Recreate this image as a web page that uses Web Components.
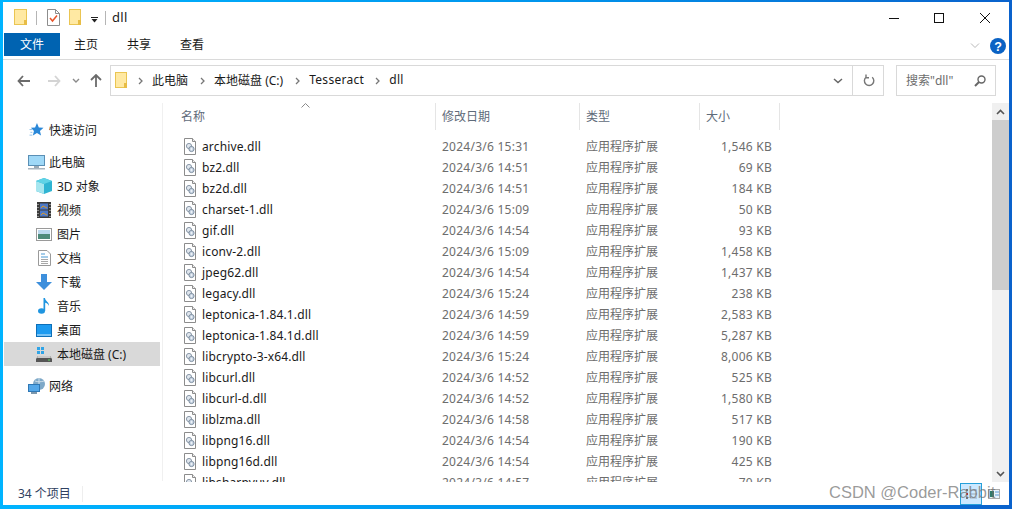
<!DOCTYPE html>
<html lang="zh-CN">
<head>
<meta charset="UTF-8">
<title>dll</title>
<style>
    html, body { margin: 0; height: 100%; }
    body { font: 12px "Noto Sans", "Noto Sans CJK SC", sans-serif; color: #1a1a1a; overflow: hidden; }
</style>
</head>
<body>

<template id="app-window">
    <style>
        :host { display: block; width: 1012px; height: 509px; box-sizing: border-box; padding: 2px 3px 4px; position: relative;
            background: linear-gradient(90deg, #00b4ff 0, #0094ec 55%, #0a62cc 100%); }
        .inner { background: #fff; height: 100%; display: flex; flex-direction: column; overflow: hidden; }
        .main { flex: 1; min-height: 0; display: flex; }
    </style>
    <div class="inner">
        <slot name="top"></slot>
        <div class="main"><slot></slot></div>
        <slot name="bottom"></slot>
    </div>
</template>

<template id="title-bar">
    <style>
        :host { display: flex; align-items: center; height: 31px; flex: none; }
        .quick { display: flex; align-items: center; padding-left: 11px; }
        .sep { width: 1px; height: 14px; background: #b5b5b5; }
        .title { margin-left: 6px; font-size: 13px; letter-spacing: .3px; margin-bottom: 1px; }
        .caps { margin-left: auto; display: flex; }
        .caps div { width: 45px; height: 31px; display: flex; align-items: center; justify-content: center; }
        .caps div:first-child { width: 44px; }
        .caps div:last-child { width: 48px; }
        svg { display: block; }
    </style>
    <div class="quick">
        <svg width="14" height="17" viewBox="0 0 14 17"><rect x=".5" y=".5" width="12" height="15" fill="#ffe9a3" stroke="#eac552"/><rect x="10" y="11" width="3" height="5" fill="#e8bd45"/></svg>
        <div class="sep" style="margin-left:8px"></div>
        <svg style="margin-left:10px" width="13" height="17" viewBox="0 0 13 17"><path d="M.5.5h8l4 4v12H.5z" fill="#fff" stroke="#8d8d8d"/><path d="M8.500.5v4h4" fill="none" stroke="#8d8d8d"/><path d="M3 9l2.500 3L10 6.500" fill="none" stroke="#e8542a" stroke-width="1.500"/></svg>
        <svg style="margin-left:9px" width="13" height="17" viewBox="0 0 13 17"><rect x=".5" y=".5" width="11" height="15" fill="#ffe9a3" stroke="#eac552"/><rect x="9" y="11" width="3" height="5" fill="#e8bd45"/></svg>
        <svg style="margin-left:8px" width="10" height="17" viewBox="0 0 10 17"><rect x="1" y="8" width="7" height="1" fill="#222"/><path d="M1.500 10h6l-3 3.500z" fill="#222"/></svg>
        <div class="sep" style="margin-left:5px"></div>
    </div>
    <span class="title"><slot></slot></span>
    <div class="caps">
        <div><svg width="10" height="10"><rect y="5" width="10" height="1" fill="#111"/></svg></div>
        <div><svg width="10" height="10"><rect x=".5" y=".5" width="9" height="9" fill="none" stroke="#111"/></svg></div>
        <div><svg width="10" height="10"><path d="M0 0l10 10M10 0L0 10" stroke="#111" fill="none"/></svg></div>
    </div>
</template>

<template id="ribbon-tabs">
    <style>
        :host { display: flex; height: 26px; flex: none; border-bottom: 1px solid #dadada; box-sizing: content-box; padding-left: 1px; align-items: flex-start; }
        .tab { height: 23px; line-height: 24px; text-align: center; width: 24px; margin-left: 29px; }
        .tab.file { width: 56px; margin-left: 0; background: #0063b1; color: #fff; }
        .tab.first { margin-left: 14px; }
        .right { margin-left: auto; display: flex; align-items: center; height: 26px; padding-right: 3px; gap: 10px; }
        svg { display: block; }
    </style>
    <div class="tab file">文件</div>
    <div class="tab first">主页</div>
    <div class="tab">共享</div>
    <div class="tab">查看</div>
    <div class="right">
        <svg width="10" height="6" viewBox="0 0 10 6"><path d="M1 .5l4 4 4-4" fill="none" stroke="#b8b8b8"/></svg>
        <svg width="16" height="16" viewBox="0 0 16 16"><circle cx="8" cy="8" r="8" fill="#0a62c4"/><text x="8" y="12.500" text-anchor="middle" font-family="Liberation Sans" font-weight="700" font-size="12.500" fill="#fff">?</text></svg>
    </div>
</template>

<template id="address-bar">
    <style>
        :host { display: flex; height: 43px; flex: none; align-items: flex-start; padding-top: 5px; box-sizing: border-box; }
        .navs { width: 107px; height: 31px; display: flex; align-items: center; flex: none; }
        .navs svg { flex: none; display: block; }
        .path { width: 774px; height: 31px; box-sizing: border-box; border: 1px solid #d9d9d9; display: flex; align-items: center; flex: none; }
        .path span { margin-bottom: 2px; }
        .ch { display: block; margin: 0 9px 0 12px; }
        .end { margin-left: auto; display: flex; align-items: center; height: 100%; }
        .end > div { height: 100%; display: flex; align-items: center; justify-content: center; }
        .drop { width: 31px; border-right: 1px solid #d9d9d9; box-sizing: border-box; padding-left: 2px; }
        .ref { width: 30px; padding-left: 1px; box-sizing: border-box; }
        .search { width: 100px; height: 31px; margin-left: 12px; box-sizing: border-box; border: 1px solid #d9d9d9; display: flex; align-items: center; padding: 0 9px; color: #6d6d6d; justify-content: space-between; }
        .search span { margin-bottom: 2px; }
    </style>
    <div class="navs">
        <svg style="margin-left:14px" width="13" height="12" viewBox="0 0 13 12"><path d="M6 1L1.500 6 6 11M1.500 6H13" fill="none" stroke="#6b6b6b" stroke-width="1.800"/></svg>
        <svg style="margin-left:18px" width="13" height="12" viewBox="0 0 13 12"><path d="M7 1l4.500 5L7 11M11.500 6H0" fill="none" stroke="#d4d4d4" stroke-width="1.800"/></svg>
        <svg style="margin-left:11px" width="8" height="6" viewBox="0 0 8 6"><path d="M1 1l3 3 3-3" fill="none" stroke="#8a8a8a" stroke-width="1.400"/></svg>
        <svg style="margin-left:10px" width="12" height="13" viewBox="0 0 12 13"><path d="M1 6l5-5 5 5M6 1v12" fill="none" stroke="#6b6b6b" stroke-width="1.800"/></svg>
    </div>
    <div class="path">
        <svg style="margin-left:4px;display:block" width="13" height="17" viewBox="0 0 13 17"><rect x=".5" y=".5" width="11" height="15" fill="#ffe9a3" stroke="#eac552"/><rect x="9" y="11" width="3" height="5" fill="#e8bd45"/></svg>
        <svg class="ch" style="margin-left:10px" width="5" height="8" viewBox="0 0 5 8"><path d="M1 1l3 3-3 3" fill="none" stroke="#777" stroke-width="1.300"/></svg>
        <span>此电脑</span>
        <svg class="ch" width="5" height="8" viewBox="0 0 5 8"><path d="M1 1l3 3-3 3" fill="none" stroke="#777" stroke-width="1.300"/></svg>
        <span>本地磁盘 (C:)</span>
        <svg class="ch" width="5" height="8" viewBox="0 0 5 8"><path d="M1 1l3 3-3 3" fill="none" stroke="#777" stroke-width="1.300"/></svg>
        <span style="letter-spacing:.3px">Tesseract</span>
        <svg class="ch" style="margin-left:11px" width="5" height="8" viewBox="0 0 5 8"><path d="M1 1l3 3-3 3" fill="none" stroke="#777" stroke-width="1.300"/></svg>
        <span style="letter-spacing:.3px">dll</span>
        <div class="end">
            <div class="drop"><svg width="10" height="6" viewBox="0 0 10 6"><path d="M1 1l4 3.500L9 1" fill="none" stroke="#666" stroke-width="1.500"/></svg></div>
            <div class="ref"><svg width="12" height="13" viewBox="0 0 12 13"><path d="M3 3.200a4.700 4.700 0 1 0 6.200 0M3 .5v3.200h3" fill="none" stroke="#777" stroke-width="1.400"/></svg></div>
        </div>
    </div>
    <div class="search">
        <span>搜索"dll"</span>
        <svg width="12" height="12" viewBox="0 0 12 12"><circle cx="7.500" cy="4.500" r="3.500" fill="none" stroke="#666" stroke-width="1.400"/><path d="M5 7l-4 4" stroke="#666" stroke-width="2"/></svg>
    </div>
</template>

<template id="nav-pane">
    <style>
        :host { display: block; width: 160px; flex: none; box-sizing: border-box; border-right: 1px solid #f0f0f0; padding: 15px 0 0 1px; margin-bottom: 1px; }
    </style>
    <slot></slot>
</template>

<template id="nav-item">
    <style>
        :host { display: flex; align-items: center; height: 24px; width: 156px; box-sizing: border-box; padding-left: 23px; }
        :host([sub]) { padding-left: 31px; }
        :host([selected]) { background: #d9d9d9; }
        :host([gap]) { margin-top: 8px; }
        .ic { width: 18px; height: 18px; flex: none; margin-right: 4px; display: flex; align-items: center; justify-content: center; }
    </style>
    <span class="ic"><slot name="icon"></slot></span>
    <span><slot></slot></span>
</template>

<template id="file-list">
    <style>
        :host { display: flex; flex: 1; min-width: 0; }
        .list { flex: 1; min-width: 0; display: flex; flex-direction: column; overflow: hidden; }
        .head, .row { display: grid; grid-template-columns: 273px 144px 120px 80px; }
        .head { height: 27px; flex: none; position: relative; color: #5f6b7a; }
        .head div { border-right: 1px solid #e5e5e5; padding-left: 6px; line-height: 27px; }
        .head div:first-child { padding-left: 18px; }
        .arrow { position: absolute; left: 138px; top: 0; display: block; }
        .rows { padding-top: 6px; flex: 1; overflow: hidden; }
        .row { height: 21px; line-height: 21px; color: #6d6d6d; }
        .row > div { white-space: nowrap; }
        .name { display: flex; align-items: center; padding-left: 21px; color: #1a1a1a; letter-spacing: .14px; }
        .name svg { display: block; margin-right: 6px; flex: none; }
        .date, .type { padding-left: 6px; }
        .date { letter-spacing: .25px; }
        .size { text-align: right; padding-right: 8px; letter-spacing: .25px; }
        .bar { width: 17px; flex: none; background: #f0f0f0; display: flex; flex-direction: column; }
        .btn { height: 17px; display: flex; align-items: center; justify-content: center; flex: none; }
        .thumb { height: 170px; background: #cdcdcd; flex: none; }
        .fill { flex: 1; }
    </style>
    <div class="list">
        <div class="head">
            <div>名称</div><div>修改日期</div><div>类型</div><div>大小</div>
            <svg class="arrow" width="9" height="5" viewBox="0 0 9 5"><path d="M.5 4.500l4-4 4 4" fill="none" stroke="#8a8a8a"/></svg>
        </div>
        <div class="rows"></div>
    </div>
    <div class="bar">
        <div class="btn"><svg width="9" height="6" viewBox="0 0 9 6"><path d="M1 5l3.500-3.500L8 5" fill="none" stroke="#555" stroke-width="1.600"/></svg></div>
        <div class="thumb"></div>
        <div class="fill"></div>
        <div class="btn"><svg width="9" height="6" viewBox="0 0 9 6"><path d="M1 1l3.500 3.500L8 1" fill="none" stroke="#555" stroke-width="1.600"/></svg></div>
    </div>
</template>

<template id="status-bar">
    <style>
        :host { display: flex; align-items: center; height: 23px; flex: none; }
        .count { margin-left: 15px; color: #2f4060; width: 64px; border-right: 1px solid #eee; line-height: 16px; }
        .views { margin-left: auto; display: flex; align-items: center; margin-right: 9px; }
        .on { width: 22px; height: 22px; box-sizing: border-box; background: #cce8ff; border: 1px solid #26a0da; display: flex; align-items: center; justify-content: center; }
        .off { margin-left: 6px; }
        svg { display: block; }
    </style>
    <span class="count"><slot></slot></span>
    <div class="views">
        <div class="on"><svg width="12" height="12" viewBox="0 0 12 12"><path d="M1 2h2M1 10h2" stroke="#777" stroke-width="2"/><path d="M1 6h2" stroke="#d23" stroke-width="2"/><path d="M5 2h7M5 6h7M5 10h7" stroke="#9ab"/></svg></div>
        <svg class="off" width="12" height="10" viewBox="0 0 12 10"><rect x=".5" y=".5" width="11" height="9" fill="#eaf3fb" stroke="#aaa"/><rect x="2" y="2" width="4" height="6" fill="#2f7a6a"/><path d="M7 3h4M7 6h4" stroke="#5b9bd5"/></svg>
    </div>
</template>

<template id="water-mark">
    <style>
        :host { position: absolute; left: 829px; top: 483px; font: 16.500px/18px "Liberation Sans", sans-serif; color: rgba(110,110,110,.7); white-space: nowrap; }
    </style>
    <slot></slot>
</template>

<script>
    // Small helper: shadow root cloned from the template with the same id as the tag
    function define(tag, setup) {
        customElements.define(tag, class extends HTMLElement {
            constructor() {
                super();
                this.attachShadow({ mode: "open" }).appendChild(document.getElementById(tag).content.cloneNode(true));
            }
            connectedCallback() {
                if (setup) setup(this);
            }
        });
    }

    const FILES = [
        ["archive.dll", "15:31", "1,546"], ["bz2.dll", "14:51", "69"], ["bz2d.dll", "14:51", "184"],
        ["charset-1.dll", "15:09", "50"], ["gif.dll", "14:54", "93"], ["iconv-2.dll", "15:09", "1,458"],
        ["jpeg62.dll", "14:54", "1,437"], ["legacy.dll", "15:24", "238"], ["leptonica-1.84.1.dll", "14:59", "2,583"],
        ["leptonica-1.84.1d.dll", "14:59", "5,287"], ["libcrypto-3-x64.dll", "15:24", "8,006"], ["libcurl.dll", "14:52", "525"],
        ["libcurl-d.dll", "14:52", "1,580"], ["liblzma.dll", "14:58", "517"], ["libpng16.dll", "14:54", "190"],
        ["libpng16d.dll", "14:54", "425"], ["libsharpyuv.dll", "14:57", "70"]
    ];

    // dll page icon with the little gear
    const DLL_ICON = '<svg width="12" height="17" viewBox="0 0 12 17"><path d="M.5.5h8l3 3v13H.5z" fill="#fff" stroke="#8c8c8c"/><path d="M8.500.5v3h3" fill="#eee" stroke="#8c8c8c"/><circle cx="5" cy="8" r="2.600" fill="#dfe6ee" stroke="#8a98a8"/><circle cx="7.500" cy="11" r="2.600" fill="#c9d6e4" stroke="#7f8fa0"/><circle cx="7.500" cy="11" r=".8" fill="#fff"/></svg>';

    define("app-window");
    define("title-bar");
    define("ribbon-tabs");
    define("address-bar");
    define("nav-pane");
    define("nav-item");
    define("status-bar");
    define("water-mark");
    define("file-list", (el) => {
        el.shadowRoot.querySelector(".rows").innerHTML = FILES.map(([name, time, size]) =>
            `<div class="row"><div class="name">${DLL_ICON}<span>${name}</span></div><div class="date">2024/3/6 ${time}</div><div class="type">应用程序扩展</div><div class="size">${size} KB</div></div>`
        ).join("");
    });
</script>

<app-window>
    <title-bar slot="top">dll</title-bar>
    <ribbon-tabs slot="top"></ribbon-tabs>
    <address-bar slot="top"></address-bar>

    <nav-pane>
        <nav-item>
            <svg slot="icon" width="15" height="14" viewBox="2 0 15 15"><path d="M10 0l2 4.800 5 .4-3.800 3.300 1.200 5-4.400-2.700-4.400 2.700 1.200-5L3.500 5.200l4.500-.4z" fill="#2b88d8"/><path d="M2 7h3M3 10h2M2 13h3" stroke="#8cc0ea"/></svg>
            快速访问
        </nav-item>
        <nav-item gap>
            <svg slot="icon" width="17" height="15" viewBox="0 0 17 15"><rect x=".5" y=".5" width="16" height="10" fill="#9fd8f7" stroke="#5a8fb5"/><rect x="6" y="11" width="5" height="2" fill="#9aa9b5"/><rect y="13" width="17" height="1.500" fill="#a9b5c0"/></svg>
            此电脑
        </nav-item>
        <nav-item sub>
            <svg slot="icon" width="16" height="16" viewBox="0 0 16 16"><path d="M8 0l8 3v10l-8 3-8-3V3z" fill="#2fb4d2"/><path d="M0 3l8 3v10l-8-3z" fill="#a6e6ef"/><path d="M8 0l8 3-8 3-8-3z" fill="#5fd3e6"/></svg>
            3D 对象
        </nav-item>
        <nav-item sub>
            <svg slot="icon" width="14" height="16" viewBox="0 0 14 16"><rect width="14" height="16" fill="#3a3a3a"/><rect x="3" y="1.500" width="8" height="6" fill="#4d79c7"/><rect x="3" y="8.500" width="8" height="6" fill="#4d79c7"/><path d="M4 6l2-2 2 1 2 1M4 13l2-2 4 2" stroke="#d9982b" fill="none"/><path d="M1 2v1M1 5v1M1 8v1M1 11v1M1 14v1M13 2v1M13 5v1M13 8v1M13 11v1M13 14v1" stroke="#ddd"/></svg>
            视频
        </nav-item>
        <nav-item sub>
            <svg slot="icon" width="16" height="13" viewBox="0 0 16 13"><rect x=".5" y=".5" width="15" height="12" fill="#fff" stroke="#9a9a9a"/><rect x="2" y="2" width="12" height="4" fill="#bcd9ee"/><rect x="2" y="6" width="12" height="5" fill="#4e8a7a"/></svg>
            图片
        </nav-item>
        <nav-item sub>
            <svg slot="icon" width="13" height="16" viewBox="0 0 13 16"><path d="M.5.500h8.500l3.500 3.500v11.500H.5z" fill="#fff" stroke="#9a9a9a"/><path d="M3 4h4M3 7h7" stroke="#4a9ad4"/><path d="M3 9.500h7M3 11.500h7M3 13.500h7" stroke="#a8a8a8"/></svg>
            文档
        </nav-item>
        <nav-item sub>
            <svg slot="icon" width="16" height="16" viewBox="0 0 16 16"><path d="M5 0h6v8h5l-8 8-8-8h5z" fill="#3d8fdc"/></svg>
            下载
        </nav-item>
        <nav-item sub>
            <svg slot="icon" width="12" height="16" viewBox="0 0 12 16"><ellipse cx="3.500" cy="13" rx="3.500" ry="2.800" fill="#1f95e0"/><path d="M5.500 13V0h1.500c0 3 4.500 4 4 8-.5-2-2.500-3-3.800-3.300V13z" fill="#1f95e0"/></svg>
            音乐
        </nav-item>
        <nav-item sub>
            <svg slot="icon" width="16" height="13" viewBox="0 0 16 13"><rect x=".5" y=".5" width="15" height="12" fill="#1e9bf0" stroke="#0d6fb8"/><path d="M1 11h14" stroke="#cfeafc"/></svg>
            桌面
        </nav-item>
        <nav-item sub selected>
            <svg slot="icon" width="16" height="16" viewBox="0 0 16 16"><path d="M1 1h3v3H1zM5 1h3v3H5zM1 5h3v3H1zM5 5h3v3H5z" fill="#2fa4e7"/><path d="M2 10h12l2 3v3H0v-3z" fill="#555"/><path d="M2 10h12l1 2H1z" fill="#c9c9c9"/><rect x="12" y="13.500" width="2" height="1" fill="#5fdc5f"/></svg>
            本地磁盘 (C:)
        </nav-item>
        <nav-item gap>
            <svg slot="icon" width="17" height="16" viewBox="0 0 17 16"><circle cx="11" cy="6" r="6" fill="#7fa9c8"/><path d="M7 3c3 1 6 1 9 0M11 0v12" stroke="#cfe0ec" fill="none"/><rect x=".5" y="6.500" width="11" height="7" fill="#54a7e8" stroke="#2f78b5"/><rect x="3" y="14" width="6" height="2" fill="#7d98ad"/></svg>
            网络
        </nav-item>
    </nav-pane>

    <file-list></file-list>

    <status-bar slot="bottom">34 个项目</status-bar>
</app-window>
<water-mark>CSDN @Coder-Rabbit</water-mark>

</body>
</html>
